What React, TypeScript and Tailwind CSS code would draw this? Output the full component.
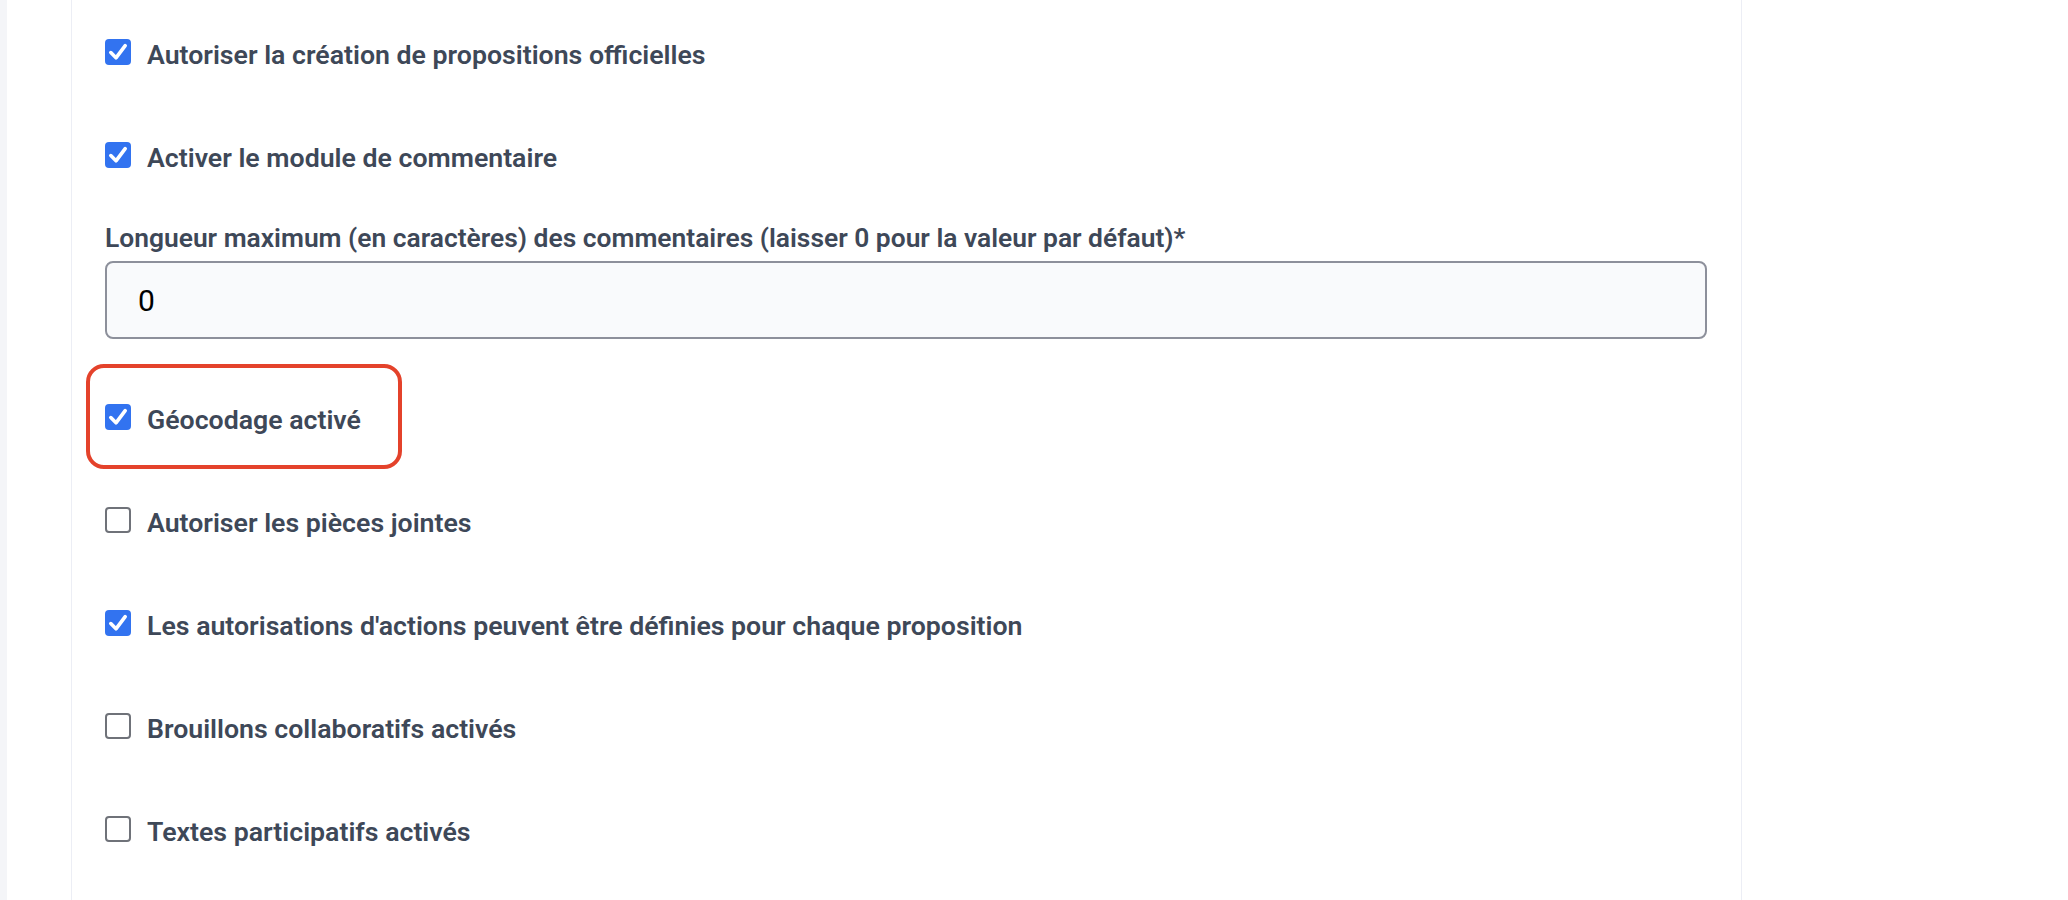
type CheckProps = {
  label: string;
  checked?: boolean;
  highlight?: boolean;
};

const CheckBox = ({ checked }: { checked: boolean }) =>
  checked ? (
    <span className="flex h-[26px] w-[26px] shrink-0 items-center justify-center rounded-[4px] bg-[#3273f0]">
      <svg width="26" height="26" viewBox="0 0 26 26" fill="none">
        <path
          d="M5.8 13.6 L11 18.8 L20.2 6.6"
          stroke="white"
          strokeWidth="3.6"
          strokeLinecap="round"
          strokeLinejoin="round"
        />
      </svg>
    </span>
  ) : (
    <span className="h-[26px] w-[26px] shrink-0 rounded-[4px] border-2 border-[#6f7279] bg-white" />
  );

const CheckRow = ({ label, checked = false, highlight = false }: CheckProps) => {
  return (
    <div className="relative flex h-[103px] items-center gap-[16px]">
      {highlight && (
        <div className="pointer-events-none absolute left-[-19px] top-[-1px] h-[105px] w-[316px] rounded-[18px] border-4 border-[#e4422b]" />
      )}
      <CheckBox checked={checked} />
      <span className="pt-[6px] text-[26.7px] font-semibold leading-[30px] text-[#3e4858]">
        {label}
      </span>
    </div>
  );
};

export default function App() {
  return (
    <div
      className="flex min-h-screen bg-white"
      style={{ fontFamily: "Roboto, 'Liberation Sans', sans-serif" }}
    >
      <div className="w-[7px] shrink-0 bg-[#f4f5f8]" />
      <div className="w-[64px] shrink-0" />
      <main className="w-[1671px] shrink-0 border-x border-[#eceef5] pl-[33px] pr-[34px]">
        <div className="flex flex-col">
          <CheckRow label="Autoriser la création de propositions officielles" checked />
          <CheckRow label="Activer le module de commentaire" checked />

          <div className="flex flex-col pb-[26px] pt-[17px]">
            <label
              htmlFor="commentsMaxLength"
              className="mb-[8px] h-[30px] text-[26.4px] font-semibold leading-[30px] text-[#3e4858]"
            >
              Longueur maximum (en caractères) des commentaires (laisser 0 pour la valeur par défaut)*
            </label>
            <input
              id="commentsMaxLength"
              type="text"
              defaultValue="0"
              className="h-[78px] w-full rounded-[8px] border-2 border-[#8d909b] bg-[#f9fafc] pl-[31px] text-[30px] text-black outline-none"
            />
          </div>

          <CheckRow label="Géocodage activé" checked highlight />
          <CheckRow label="Autoriser les pièces jointes" />
          <CheckRow
            label="Les autorisations d'actions peuvent être définies pour chaque proposition"
            checked
          />
          <CheckRow label="Brouillons collaboratifs activés" />
          <CheckRow label="Textes participatifs activés" />
        </div>
      </main>
    </div>
  );
}
